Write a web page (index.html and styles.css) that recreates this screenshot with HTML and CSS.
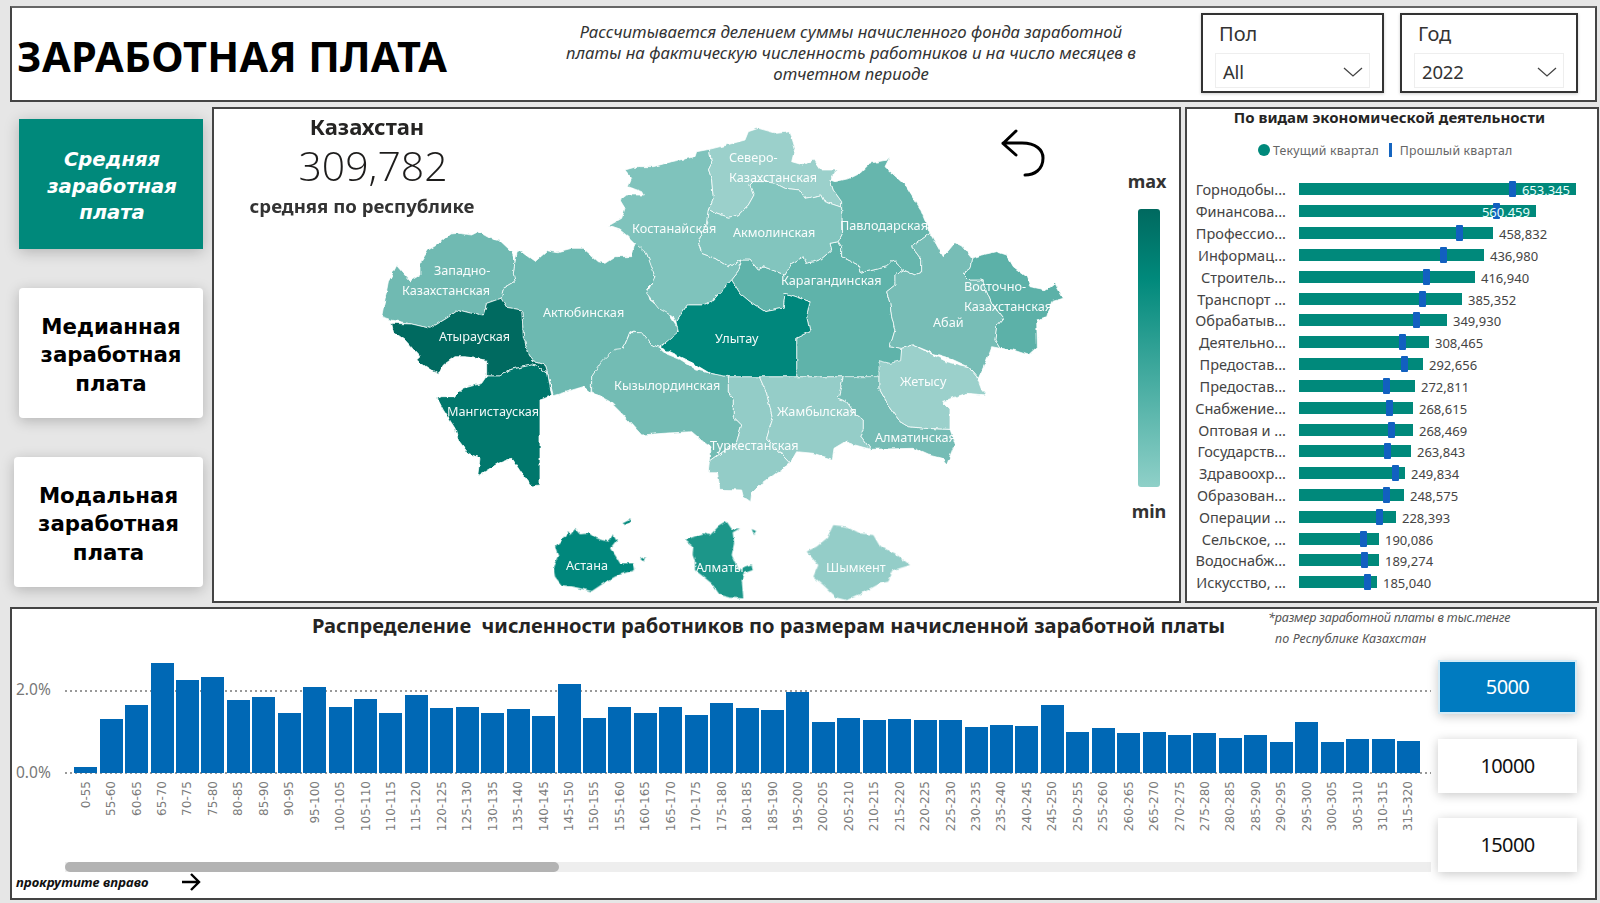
FILE: index.html
```html
<!DOCTYPE html>
<html lang="ru">
<head>
<meta charset="utf-8">
<title>Заработная плата</title>
<link rel="stylesheet" href="styles.css">
</head>
<body>
<div class="page">
  <header class="head">
    <h1 class="title">ЗАРАБОТНАЯ ПЛАТА</h1>
    <p class="desc">Рассчитывается делением суммы начисленного фонда заработной<br>платы на фактическую численность работников и на число месяцев в<br>отчетном периоде</p>
    <div class="filters">
      <div class="filter">
        <div class="filter-label">Пол</div>
        <div class="drop"><span>All</span><svg class="chev" viewBox="0 0 20 10"><path d="M1 1l9 8 9-8"/></svg></div>
      </div>
      <div class="filter">
        <div class="filter-label">Год</div>
        <div class="drop"><span>2022</span><svg class="chev" viewBox="0 0 20 10"><path d="M1 1l9 8 9-8"/></svg></div>
      </div>
    </div>
  </header>

  <main class="mid">
    <nav class="nav">
      <div class="btn active">Средняя<br>заработная<br>плата</div>
      <div class="btn">Медианная<br>заработная<br>плата</div>
      <div class="btn wide">Модальная<br>заработная<br>плата</div>
    </nav>

    <section class="map">
      <svg class="map-svg" viewBox="214 109 965 492">
        <defs>
          <filter id="rough" filterUnits="userSpaceOnUse" x="214" y="109" width="965" height="492">
            <feTurbulence type="fractalNoise" baseFrequency="0.16" numOctaves="2" seed="4" result="n"/>
            <feDisplacementMap in="SourceGraphic" in2="n" scale="3.5" xChannelSelector="R" yChannelSelector="G"/>
          </filter>
        </defs>
        <g filter="url(#rough)">
        <g class="regions" transform="translate(375 220) scale(.33333)">
          <path fill="#6db9b1" d="M428 92L445 100 480 125 520 90 550 95 590 85 625 85 670 125 690 130 720 110 770 110 780 70 805 75 815 100 835 150 840 180 815 205 825 240 880 280 910 325 905 345 850 382 825 370 800 340 765 335 745 385 715 405 680 430 650 470 648 518 625 500 535 527 518 460 510 435 475 425 460 400 445 350 440 270 395 262 378 235 385 205 420 185 415 160 420 125Z"/>
          <path fill="#6fbab2" d="M20 290L40 185 65 137 105 183 135 165 135 130 160 90 185 75 225 42 250 40 290 45 310 35 345 55 375 62 410 95 420 125 415 160 420 185 385 205 378 235 335 250 325 285 290 280 250 270 215 295 165 325 110 312 50 300Z"/>
          <path fill="#006a60" d="M50 310L110 312 165 325 215 295 250 270 290 280 325 285 335 250 378 235 395 262 440 270 445 350 460 400 475 425 510 435 518 460 490 440 470 435 400 450 375 468 335 468 335 420 270 410 240 410 205 435 190 463 160 445 125 420 135 410 90 360 55 335Z"/>
          <path fill="#00776c" d="M335 468L375 468 400 450 470 435 490 440 518 460 530 527 495 540 495 795 470 798 440 760 410 715 370 730 308 768 315 715 280 700 250 660 240 625 205 570 187 535 200 530 240 530 265 505 320 490Z"/>
        </g>
        <g class="regions" transform="translate(580 330) scale(.33333)">
          <path fill="#73bcb4" d="M150 8L185 8 210 40 235 52 255 70 300 88 350 120 385 128 445 140 445 185 460 210 460 260 485 285 470 335 388 395 390 350 370 335 335 305 250 310 185 315 135 260 90 215 35 185 35 140 65 95 105 58 130 55Z"/>
          <path fill="#93ccc7" d="M445 140L538 140 560 190 578 265 560 325 630 400 595 425 540 465 515 490 512 515 490 500 485 480 420 478 412 425 385 425 388 395 470 335 485 285 460 260 460 210 445 185Z"/>
          <path fill="#95cdc8" d="M538 140L790 140 782 175 775 205 800 215 825 250 850 270 850 300 840 315 872 358 825 345 795 335 762 355 757 388 700 370 650 365 630 400 560 325 578 265 560 190Z"/>
          <path fill="#75bcb5" d="M790 140L815 105 860 88 897 88 897 175 925 225 960 275 985 290 1040 295 1110 298 1125 340 1115 365 1100 405 1085 385 1045 375 1000 355 872 358 840 315 850 300 850 270 825 250 800 215 775 205 782 175Z"/>
        </g>
        <g class="regions" transform="translate(600 120) scale(.33333)">
          <path fill="#5fb3aa" d="M425 420L450 420 475 450 490 440 530 455 555 465 575 430 610 410 620 430 660 420 695 390 690 370 715 365 725 380 725 410 775 435 780 460 860 440 880 420 910 450 885 465 885 495 860 515 870 550 875 590 885 630 870 680 905 685 902 770 590 770 590 655 630 635 620 590 630 545 555 520 550 565 495 575 450 545 420 520 395 480 415 455Z"/>
          <path fill="#7fc3bc" d="M75 150L110 140 160 140 215 125 285 110 290 95 328 88 335 130 325 150 335 180 340 235 325 270 320 310 295 365 305 400 345 415 385 440 425 420 415 455 395 480 340 540 310 555 262 555 228 605 220 590 175 565 140 520 165 470 140 400 105 370 85 350 60 330 25 318 65 295 75 265 60 240 80 225 130 225 125 215 85 200 95 175Z"/>
          <path fill="#9bd0cb" d="M328 88L380 75 435 60 445 35 475 25 530 40 570 35 585 85 575 125 610 135 640 120 660 150 710 150 690 180 700 210 725 245 725 262 675 245 665 225 615 235 600 210 555 205 525 190 495 185 460 185 450 195 462 225 445 255 415 285 385 292 325 270 340 235 335 180 325 150 335 130Z"/>
          <path fill="#82c5be" d="M325 270L385 292 415 285 445 255 462 225 450 195 460 185 495 185 525 190 555 205 600 210 615 235 665 225 675 245 725 262 728 340 715 365 690 370 695 390 660 420 620 430 610 410 575 430 555 465 530 455 490 440 475 450 450 420 425 420 385 440 345 415 305 400 295 365 320 310Z"/>
          <path fill="#66b6ad" d="M705 185L750 175 780 160 810 130 860 120 870 110 855 140 920 200 960 265 990 340 935 380 965 420 965 455 945 465 910 450 880 420 860 440 780 460 775 435 725 410 725 380 715 365 728 340 725 262 725 245 700 210 690 180Z"/>
          <path fill="#77bdb6" d="M990 340L1030 410 1055 380 1065 368 1085 378 1115 415 1110 445 1090 460 1110 480 1145 480 1175 550 1210 595 1190 620 1185 660 1200 685 1175 680 1160 720 1135 775 1105 740 1050 715 1000 700 940 675 905 685 870 680 885 630 875 590 870 550 860 515 885 495 885 465 910 450 945 465 965 455 965 420 935 380Z"/>
          <path fill="#5cb1a8" d="M1115 415L1145 405 1190 395 1220 405 1240 440 1280 470 1290 500 1340 510 1365 490 1390 535 1355 545 1340 590 1310 600 1312 680 1285 705 1240 690 1200 685 1185 660 1190 620 1210 595 1175 550 1145 480 1110 480 1090 460 1110 445Z"/>
          <path fill="#00877b" d="M395 480L420 520 450 545 495 575 550 565 555 520 630 545 620 590 630 635 590 655 590 770 385 770 330 760 280 730 180 682 235 635 228 605 262 555 310 555 340 540Z"/>
        </g>
        <g class="regions" transform="translate(580 330) scale(.33333)">
          <path fill="#9bd0cb" d="M897 92L930 100 962 92 965 55 1000 45 1060 75 1100 95 1165 110 1190 140 1205 180 1218 195 1160 190 1085 215 1110 240 1110 298 1040 295 985 290 960 275 925 225 897 175Z"/>
        </g>
        <g transform="translate(540 505) scale(.33333)">
          <path fill="#00877b" d="M75 92L85 78 90 90 105 72 120 88 150 85 170 100 205 110 220 88 230 105 210 130 225 150 240 175 280 175 285 195 250 205 225 215 190 235 155 258 100 245 65 240 45 215 40 185 55 150 45 125 60 110ZM248 52L272 40 268 52 255 60ZM300 160L318 158 314 168 305 165Z"/>
          <path fill="#1a9689" d="M435 105L490 85 510 90 535 65 560 50 575 72 600 70 578 82 582 115 575 150 595 195 615 185 635 178 638 195 610 205 605 225 610 280 570 278 540 270 515 235 490 215 465 195 465 170 458 150 460 125ZM635 72L648 78 643 90Z"/>
          <path fill="#94cdc8" d="M880 60L920 65 960 85 1000 90 1020 125 1065 145 1110 180 1060 195 1045 230 1020 235 975 260 920 285 890 278 850 240 820 215 835 180 800 140 830 125 860 100Z"/>
        </g>
        </g>
        <g class="labels">
          <text x="729" y="162">Северо-</text>
          <text x="729" y="182">Казахстанская</text>
          <text x="632" y="233">Костанайская</text>
          <text x="733" y="237">Акмолинская</text>
          <text x="840" y="230">Павлодарская</text>
          <text x="781" y="285">Карагандинская</text>
          <text x="715" y="343">Улытау</text>
          <text x="933" y="327">Абай</text>
          <text x="964" y="291">Восточно-</text>
          <text x="964" y="311">Казахстанская</text>
          <text x="900" y="386">Жетысу</text>
          <text x="777" y="416">Жамбылская</text>
          <text x="875" y="442">Алматинская</text>
          <text x="710" y="450">Туркестанская</text>
          <text x="614" y="390">Кызылординская</text>
          <text x="434" y="275">Западно-</text>
          <text x="402" y="295">Казахстанская</text>
          <text x="543" y="317">Актюбинская</text>
          <text x="439" y="341">Атырауская</text>
          <text x="447" y="416">Мангистауская</text>
          <text x="566" y="570">Астана</text>
          <text x="696" y="572">Алматы</text>
          <text x="826" y="572">Шымкент</text>
        </g>
        <path class="back" d="M1016 131L1003 143.5 1016 155M1003 143H1022C1036 143 1043 150 1043 158 1043 170 1034 175 1025 175"/>
      </svg>
      <div class="kpi">
        <div class="kpi-name">Казахстан</div>
        <div class="kpi-num">309,782</div>
        <div class="kpi-sub">средняя по республике</div>
      </div>
      <div class="scale">
        <div class="scale-t">max</div>
        <div class="scale-bar"></div>
        <div class="scale-b">min</div>
      </div>
    </section>

    <aside class="side">
      <h2 class="side-title">По видам экономической деятельности</h2>
      <div class="legend">
        <span class="dot"></span><span>Текущий квартал</span>
        <span class="tick"></span><span>Прошлый квартал</span>
      </div>
      <div class="rows">
        <div class="row"><span class="rl">Горнодобы...</span><div class="bar" style="width:277px"><i class="mk" style="left:213px"></i><b class="in">653,345</b></div></div>
        <div class="row"><span class="rl">Финансова...</span><div class="bar" style="width:237px"><i class="mk" style="left:197px"></i><b class="in">560,459</b></div></div>
        <div class="row"><span class="rl">Профессио...</span><div class="bar" style="width:194px"><i class="mk" style="left:160px"></i></div><span class="v">458,832</span></div>
        <div class="row"><span class="rl">Информац...</span><div class="bar" style="width:185px"><i class="mk" style="left:144px"></i></div><span class="v">436,980</span></div>
        <div class="row"><span class="rl">Строитель...</span><div class="bar" style="width:176px"><i class="mk" style="left:127px"></i></div><span class="v">416,940</span></div>
        <div class="row"><span class="rl">Транспорт ...</span><div class="bar" style="width:163px"><i class="mk" style="left:123px"></i></div><span class="v">385,352</span></div>
        <div class="row"><span class="rl">Обрабатыв...</span><div class="bar" style="width:148px"><i class="mk" style="left:117px"></i></div><span class="v">349,930</span></div>
        <div class="row"><span class="rl">Деятельно...</span><div class="bar" style="width:130px"><i class="mk" style="left:103px"></i></div><span class="v">308,465</span></div>
        <div class="row"><span class="rl">Предостав...</span><div class="bar" style="width:124px"><i class="mk" style="left:105px"></i></div><span class="v">292,656</span></div>
        <div class="row"><span class="rl">Предостав...</span><div class="bar" style="width:116px"><i class="mk" style="left:87px"></i></div><span class="v">272,811</span></div>
        <div class="row"><span class="rl">Снабжение...</span><div class="bar" style="width:114px"><i class="mk" style="left:90px"></i></div><span class="v">268,615</span></div>
        <div class="row"><span class="rl">Оптовая и ...</span><div class="bar" style="width:114px"><i class="mk" style="left:92px"></i></div><span class="v">268,469</span></div>
        <div class="row"><span class="rl">Государств...</span><div class="bar" style="width:112px"><i class="mk" style="left:88px"></i></div><span class="v">263,843</span></div>
        <div class="row"><span class="rl">Здравоохр...</span><div class="bar" style="width:106px"><i class="mk" style="left:96px"></i></div><span class="v">249,834</span></div>
        <div class="row"><span class="rl">Образован...</span><div class="bar" style="width:105px"><i class="mk" style="left:87px"></i></div><span class="v">248,575</span></div>
        <div class="row"><span class="rl">Операции ...</span><div class="bar" style="width:97px"><i class="mk" style="left:80px"></i></div><span class="v">228,393</span></div>
        <div class="row"><span class="rl">Сельское, ...</span><div class="bar" style="width:80px"><i class="mk" style="left:64px"></i></div><span class="v">190,086</span></div>
        <div class="row"><span class="rl">Водоснабж...</span><div class="bar" style="width:80px"><i class="mk" style="left:65px"></i></div><span class="v">189,274</span></div>
        <div class="row"><span class="rl">Искусство, ...</span><div class="bar" style="width:78px"><i class="mk" style="left:68px"></i></div><span class="v">185,040</span></div>
      </div>
    </aside>
  </main>

  <section class="dist">
    <div class="dist-left">
      <div class="dist-head">
        <h2 class="dist-title">Распределение&nbsp; численности работников по размерам начисленной заработной платы</h2>
        <p class="note">*размер заработной платы в тыс.тенге<br><span class="note2">по Республике Казахстан</span></p>
      </div>
      <div class="plot">
        <span class="yl y2">2.0%</span>
        <span class="yl y0">0.0%</span>
        <div class="gl g2"></div>
        <div class="gl g0"></div>
        <div class="cols">
          <div class="col"><div class="cb"><div class="cf" style="height:6px"></div></div><span class="cl">0-55</span></div>
          <div class="col"><div class="cb"><div class="cf" style="height:54px"></div></div><span class="cl">55-60</span></div>
          <div class="col"><div class="cb"><div class="cf" style="height:68px"></div></div><span class="cl">60-65</span></div>
          <div class="col"><div class="cb"><div class="cf" style="height:110px"></div></div><span class="cl">65-70</span></div>
          <div class="col"><div class="cb"><div class="cf" style="height:93px"></div></div><span class="cl">70-75</span></div>
          <div class="col"><div class="cb"><div class="cf" style="height:96px"></div></div><span class="cl">75-80</span></div>
          <div class="col"><div class="cb"><div class="cf" style="height:73px"></div></div><span class="cl">80-85</span></div>
          <div class="col"><div class="cb"><div class="cf" style="height:76px"></div></div><span class="cl">85-90</span></div>
          <div class="col"><div class="cb"><div class="cf" style="height:60px"></div></div><span class="cl">90-95</span></div>
          <div class="col"><div class="cb"><div class="cf" style="height:86px"></div></div><span class="cl">95-100</span></div>
          <div class="col"><div class="cb"><div class="cf" style="height:66px"></div></div><span class="cl">100-105</span></div>
          <div class="col"><div class="cb"><div class="cf" style="height:74px"></div></div><span class="cl">105-110</span></div>
          <div class="col"><div class="cb"><div class="cf" style="height:60px"></div></div><span class="cl">110-115</span></div>
          <div class="col"><div class="cb"><div class="cf" style="height:78px"></div></div><span class="cl">115-120</span></div>
          <div class="col"><div class="cb"><div class="cf" style="height:65px"></div></div><span class="cl">120-125</span></div>
          <div class="col"><div class="cb"><div class="cf" style="height:66px"></div></div><span class="cl">125-130</span></div>
          <div class="col"><div class="cb"><div class="cf" style="height:60px"></div></div><span class="cl">130-135</span></div>
          <div class="col"><div class="cb"><div class="cf" style="height:64px"></div></div><span class="cl">135-140</span></div>
          <div class="col"><div class="cb"><div class="cf" style="height:57px"></div></div><span class="cl">140-145</span></div>
          <div class="col"><div class="cb"><div class="cf" style="height:89px"></div></div><span class="cl">145-150</span></div>
          <div class="col"><div class="cb"><div class="cf" style="height:55px"></div></div><span class="cl">150-155</span></div>
          <div class="col"><div class="cb"><div class="cf" style="height:66px"></div></div><span class="cl">155-160</span></div>
          <div class="col"><div class="cb"><div class="cf" style="height:60px"></div></div><span class="cl">160-165</span></div>
          <div class="col"><div class="cb"><div class="cf" style="height:66px"></div></div><span class="cl">165-170</span></div>
          <div class="col"><div class="cb"><div class="cf" style="height:58px"></div></div><span class="cl">170-175</span></div>
          <div class="col"><div class="cb"><div class="cf" style="height:70px"></div></div><span class="cl">175-180</span></div>
          <div class="col"><div class="cb"><div class="cf" style="height:65px"></div></div><span class="cl">180-185</span></div>
          <div class="col"><div class="cb"><div class="cf" style="height:63px"></div></div><span class="cl">185-190</span></div>
          <div class="col"><div class="cb"><div class="cf" style="height:81px"></div></div><span class="cl">195-200</span></div>
          <div class="col"><div class="cb"><div class="cf" style="height:51px"></div></div><span class="cl">200-205</span></div>
          <div class="col"><div class="cb"><div class="cf" style="height:55px"></div></div><span class="cl">205-210</span></div>
          <div class="col"><div class="cb"><div class="cf" style="height:53px"></div></div><span class="cl">210-215</span></div>
          <div class="col"><div class="cb"><div class="cf" style="height:54px"></div></div><span class="cl">215-220</span></div>
          <div class="col"><div class="cb"><div class="cf" style="height:53px"></div></div><span class="cl">220-225</span></div>
          <div class="col"><div class="cb"><div class="cf" style="height:53px"></div></div><span class="cl">225-230</span></div>
          <div class="col"><div class="cb"><div class="cf" style="height:46px"></div></div><span class="cl">230-235</span></div>
          <div class="col"><div class="cb"><div class="cf" style="height:48px"></div></div><span class="cl">235-240</span></div>
          <div class="col"><div class="cb"><div class="cf" style="height:47px"></div></div><span class="cl">240-245</span></div>
          <div class="col"><div class="cb"><div class="cf" style="height:68px"></div></div><span class="cl">245-250</span></div>
          <div class="col"><div class="cb"><div class="cf" style="height:41px"></div></div><span class="cl">250-255</span></div>
          <div class="col"><div class="cb"><div class="cf" style="height:45px"></div></div><span class="cl">255-260</span></div>
          <div class="col"><div class="cb"><div class="cf" style="height:40px"></div></div><span class="cl">260-265</span></div>
          <div class="col"><div class="cb"><div class="cf" style="height:41px"></div></div><span class="cl">265-270</span></div>
          <div class="col"><div class="cb"><div class="cf" style="height:38px"></div></div><span class="cl">270-275</span></div>
          <div class="col"><div class="cb"><div class="cf" style="height:40px"></div></div><span class="cl">275-280</span></div>
          <div class="col"><div class="cb"><div class="cf" style="height:35px"></div></div><span class="cl">280-285</span></div>
          <div class="col"><div class="cb"><div class="cf" style="height:38px"></div></div><span class="cl">285-290</span></div>
          <div class="col"><div class="cb"><div class="cf" style="height:31px"></div></div><span class="cl">290-295</span></div>
          <div class="col"><div class="cb"><div class="cf" style="height:51px"></div></div><span class="cl">295-300</span></div>
          <div class="col"><div class="cb"><div class="cf" style="height:31px"></div></div><span class="cl">300-305</span></div>
          <div class="col"><div class="cb"><div class="cf" style="height:34px"></div></div><span class="cl">305-310</span></div>
          <div class="col"><div class="cb"><div class="cf" style="height:34px"></div></div><span class="cl">310-315</span></div>
          <div class="col"><div class="cb"><div class="cf" style="height:32px"></div></div><span class="cl">315-320</span></div>
        </div>
      </div>
      <div class="track"><div class="thumb"></div></div>
      <div class="hint">
        <em>прокрутите вправо</em>
        <svg class="hint-arrow" viewBox="0 0 20 18"><path d="M1 9h17M10 1l8 8-8 8"/></svg>
      </div>
    </div>
    <div class="sizes">
      <div class="size on">5000</div>
      <div class="size">10000</div>
      <div class="size">15000</div>
    </div>
  </section>
</div>
</body>
</html>
```

FILE: styles.css
```css
* { box-sizing: border-box; }
html, body { margin: 0; padding: 0; }
body { font-family: "Noto Sans", "DejaVu Sans", sans-serif; color: #252423; }
.page {
  width: 1600px; height: 903px; overflow: hidden; background: #e6e6e6;
  padding: 6px 3px 0 10px;
  display: grid; grid-template-rows: 97px 496px 293px; row-gap: 4px;
}

/* header */
.head {
  background: #fff; border: 2px solid #444; border-top-color: #666; margin-bottom: 1px;
  display: flex; align-items: flex-start; position: relative;
}
.title {
  margin: 25px 0 0 5px; flex: 0 0 524px;
  font: 700 41.5px/46px "Noto Sans", sans-serif; letter-spacing: .3px; color: #000;
  white-space: nowrap;
}
.desc {
  margin: 13px 0 0 0; flex: 0 0 620px; text-align: center;
  font: italic 400 16.8px/21.2px "Noto Sans", sans-serif; color: #333;
}
.filters { margin: 5px 0 0 40px; display: flex; gap: 16px; }
.filter {
  border: 2px solid #333; height: 80px; padding: 5px 12px 0 12px; background: #fff;
  box-shadow: 0 1px 3px rgba(0,0,0,.2);
}
.filter:first-child { width: 183px; }
.filter:last-child { width: 178px; }
.filter-label { font-size: 20px; line-height: 27px; color: #333; padding-left: 4px; height: 33px; }
.drop {
  height: 35px; border: 1px solid #eee; display: flex; align-items: center; justify-content: space-between;
  padding: 2px 6px 0 7px; font-size: 18.5px; letter-spacing: -.2px; color: #333;
}
.chev { width: 20px; height: 10px; fill: none; stroke: #444; stroke-width: 1.3; }

/* middle */
.mid { display: grid; grid-template-columns: 202px 969px 414px; min-height: 0; }
.nav { display: flex; flex-direction: column; gap: 39px; padding: 12px 9px 0 9px; }
.btn {
  height: 130px; background: #fff; border-radius: 4px;
  display: flex; align-items: center; justify-content: center; text-align: center;
  font: 700 21.3px/28.5px "DejaVu Sans", sans-serif; color: #000;
  padding-top: 5px;
  box-shadow: 0 3px 14px rgba(0,0,0,.22);
}
.btn.active { background: #00897b; color: #fff; font-style: italic; font-size: 19.6px; line-height: 26.5px; border-radius: 0; padding-top: 6px; padding-left: 2px; }
.btn.wide { margin-left: -5px; }

.map { position: relative; background: #fff; border: 2px solid #444; height: 496px; }
.map-svg { display: block; width: 965px; height: 492px; }
.regions path { stroke: #fff; stroke-width: 2.2; stroke-linejoin: round; }
.labels text { font: 400 12.7px "Noto Sans", sans-serif; fill: #fff; fill-opacity: .95; }
.back { fill: none; stroke: #000; stroke-width: 3; stroke-linecap: round; stroke-linejoin: round; }
.kpi { position: absolute; left: 30px; top: 3px; width: 240px; text-align: center; }
.kpi-name { font: 700 22px/28px "Noto Sans", sans-serif; color: #252423; margin-left: 6px; }
.kpi-num { font: 300 41px/48px "Open Sans", sans-serif; color: #1d1c1b; margin: 1px 0 0 18px; }
.kpi-sub { font: 700 18.6px/28px "Noto Sans", sans-serif; color: #333; margin: 3px 0 0 -4px; white-space: nowrap; }
.scale { position: absolute; left: 905px; top: 58px; width: 60px; display: flex; flex-direction: column; align-items: center; }
.scale-t, .scale-b { font: 700 18px/28px "Noto Sans", sans-serif; color: #333; }
.scale-t { margin-left: -4px; }
.scale-bar { width: 22px; height: 278px; margin: 14px 0 10px; border-radius: 3px; background: linear-gradient(#00695f, #00897b 25%, #8fd0c8); }

/* side */
.side { margin-left: 4px; width: 414px; height: 496px; background: #fff; border: 2px solid #444; }
.side-title { margin: -2px 5px 0 0; text-align: center; font: 700 15px/20px "Noto Sans", sans-serif; color: #252423; }
.legend { display: flex; align-items: center; margin: 13px 0 0 71px; height: 20px; font-size: 12.3px; color: #666; letter-spacing: .2px; }
.dot { width: 12px; height: 12px; border-radius: 50%; background: #00897b; margin-right: 3px; }
.tick { width: 3px; height: 14px; background: #1565c0; margin: 0 8px 0 10px; }
.rows { margin-top: 18.5px; }
.row { height: 21.83px; display: flex; align-items: center; }
.rl { flex: 0 0 99px; text-align: right; font-size: 14.5px; color: #444; white-space: nowrap; }
.bar { position: relative; margin-left: 13px; height: 12px; background: #00897b; flex: none; }
.mk { position: absolute; top: -2px; width: 7px; height: 16px; margin-left: -3.5px; background: #1260c0; border-radius: 1px; }
.in { position: absolute; right: 6px; top: -2px; font: 400 13px/18px "Noto Sans", sans-serif; color: #e8fffb; }
.v { margin-left: 6px; font-size: 13px; color: #444; padding-top: 2px; }

/* distribution */
.dist { background: #fff; border: 2px solid #444; display: flex; height: 293px; position: relative; }
.dist-left { flex: 1; min-width: 0; }
.dist-head { height: 41px; position: relative; }
.dist-title { margin: 0; padding: 4px 0 0 300px; font: 700 20.1px/26px "Noto Sans", sans-serif; color: #252423; white-space: nowrap; }
.note { position: absolute; left: 1256px; top: -1px; margin: 0; font: italic 400 12.6px/20.5px "Noto Sans", sans-serif; letter-spacing: -.2px; color: #555; white-space: nowrap; }
.note2 { margin-left: 7px; letter-spacing: .1px; }
.plot { position: relative; height: 212px; padding-left: 61px; }
.cols { display: flex; position: relative; }
.col { flex: 0 0 25.45px; display: flex; flex-direction: column; align-items: center; }
.cb { height: 123px; display: flex; align-items: flex-end; }
.cf { width: 23px; background: #0068b5; }
.cl {
  margin-top: 8px; writing-mode: vertical-rl; transform: rotate(180deg);
  font: 400 12px/14px "DejaVu Sans", sans-serif; color: #7b7b7b; white-space: nowrap;
}
.gl { position: absolute; left: 53px; width: 1366px; height: 2px; background: repeating-linear-gradient(90deg, #999 0 2px, transparent 2px 5px); }
.g2 { top: 40px; }
.g0 { top: 122px; }
.yl { position: absolute; left: 4px; font-size: 15.5px; line-height: 20px; color: #777; }
.y2 { top: 29px; }
.y0 { top: 112px; }
.track { margin: 0 0 0 53px; width: 1366px; height: 10px; background: #eee; }
.thumb { width: 494px; height: 10px; border-radius: 5px; background: #b3b3b3; }
.hint { display: flex; align-items: center; height: 22px; margin: -1px 0 0 4px; }
.hint em { font: italic 700 13.2px/20px "Noto Sans", sans-serif; color: #111; width: 165px; }
.hint-arrow { width: 20px; height: 18px; fill: none; stroke: #000; stroke-width: 2.4; }

.sizes { position: absolute; right: 18px; top: 51px; width: 139px; display: flex; flex-direction: column; gap: 25.5px; }
.size {
  height: 53.5px; background: #fff; display: flex; align-items: center; justify-content: center;
  font-size: 20px; letter-spacing: -.6px; color: #111; box-shadow: 0 2px 10px rgba(0,0,0,.22);
}
.size.on { background: #007bc0; color: #fff; border: 2px solid #d5ecf7; }
```
